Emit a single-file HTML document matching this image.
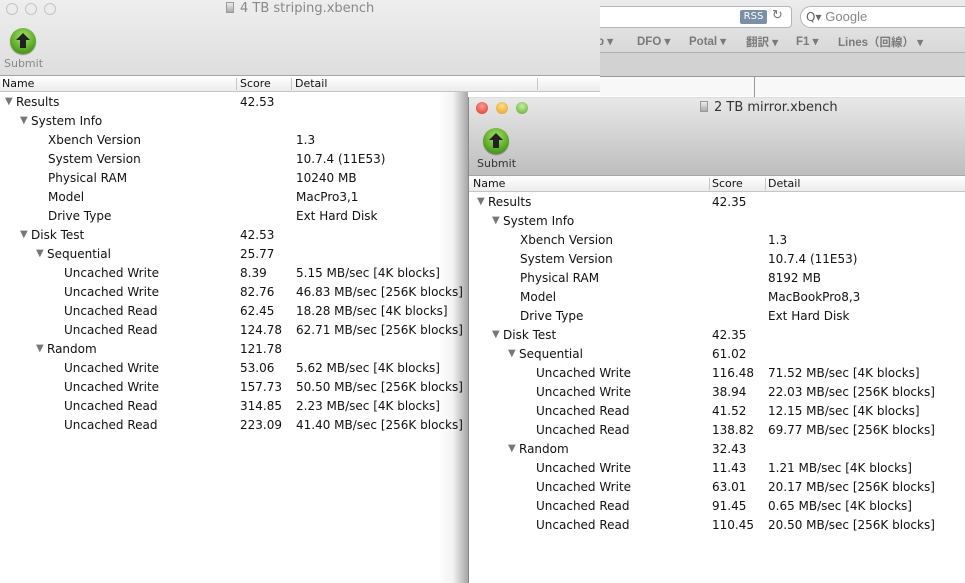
<!DOCTYPE html>
<html><head><meta charset="utf-8"><style>
*{margin:0;padding:0;box-sizing:border-box}
body{width:965px;height:583px;overflow:hidden;position:relative;background:#fff;font-family:"DejaVu Sans","Liberation Sans",sans-serif;font-size:12px;color:#111}
.a{position:absolute;white-space:nowrap}
.r{position:absolute;height:19px;line-height:19px;white-space:nowrap}
.t{display:inline-block;width:11px;font-size:10px;color:#777;vertical-align:top;line-height:18px}
.hdr{position:absolute;height:17px;line-height:16px;font-size:11px;background:linear-gradient(#fff,#ececec);border-top:1px solid #a5a5a5;border-bottom:1px solid #c5c5c5}
.dv{position:absolute;top:2px;width:1px;height:12px;background:#c5c5c5}
.btn{position:absolute;width:26px;height:26px;border-radius:50%;background:radial-gradient(circle at 50% 35%,#a6e46a,#4f9d1d 70%,#2f6d10);box-shadow:0 1px 1px rgba(0,0,0,.4)}
.btn:after{content:"";position:absolute;left:10px;top:12px;width:6px;height:8px;background:#222}
.btn:before{content:"";position:absolute;left:6px;top:5px;border-left:7px solid transparent;border-right:7px solid transparent;border-bottom:7px solid #222}
.bm{position:absolute;top:34px;font-size:11.5px;font-weight:bold;color:#7a7a7a;font-family:'Liberation Sans','Noto Sans CJK JP',sans-serif}
.doc{display:inline-block;width:8px;height:11px;background:linear-gradient(#eee,#aaa);border:1px solid #999;margin-right:6px;vertical-align:-1px}
.gl{position:absolute;top:3px;width:12px;height:12px;border-radius:50%;border:1px solid #c4c4c4;background:#ececec}
</style></head><body>
<!-- browser background -->
<div class="a" style="left:600px;top:0;width:365px;height:53px;background:linear-gradient(#ececec,#d8d8d8)"></div>
<div class="a" style="left:560px;top:6px;width:232px;height:22px;background:#fff;border:1px solid #b5b5b5;border-radius:4px"></div>
<div class="a" style="left:740px;top:10px;width:27px;height:14px;background:#7b8fa6;color:#fff;font-size:10px;line-height:14px;text-align:center;border-radius:2px">RSS</div>
<div class="a" style="left:772px;top:8px;font-size:13px;color:#777">↻</div>
<div class="a" style="left:800px;top:6px;width:180px;height:22px;background:#fff;border:1px solid #b5b5b5;border-radius:11px"></div>
<div class="a" style="left:806px;top:9px;font-size:12px;color:#666">Q▾ <span style="color:#888;font-family:'Liberation Sans',sans-serif;font-size:13px">Google</span></div>
<div class="bm" style="left:597px">p ▾</div>
<div class="bm" style="left:637px">DFO ▾</div>
<div class="bm" style="left:689px">Potal ▾</div>
<div class="bm" style="left:746px">翻訳 ▾</div>
<div class="bm" style="left:796px">F1 ▾</div>
<div class="bm" style="left:838px">Lines（回線） ▾</div>
<div class="a" style="left:600px;top:52px;width:365px;height:24px;background:#d2d2d2;border-top:1px solid #b0b0b0"></div>
<div class="a" style="left:600px;top:76px;width:365px;height:20px;background:#f8f8f8;border-top:1px solid #999"></div>
<div class="a" style="left:754px;top:77px;width:1px;height:20px;background:#999"></div>

<!-- back window -->
<div class="a" style="left:0;top:0;width:600px;height:76px;background:linear-gradient(#eeeeee,#dedede)"></div>
<div class="gl" style="left:6px"></div><div class="gl" style="left:25px"></div><div class="gl" style="left:44px"></div>
<div class="a" style="left:226px;top:1px;font-size:13px;color:#888;font-family:'DejaVu Sans',sans-serif"><span class="doc"></span>4 TB striping.xbench</div>
<div class="btn" style="left:10px;top:28px"></div>
<div class="a" style="left:4px;top:57px;font-size:11px;color:#888">Submit</div>
<div class="hdr" style="left:0;top:75px;width:600px"><span class="a" style="left:2px">Name</span><span class="dv" style="left:236px"></span><span class="a" style="left:240px">Score</span><span class="dv" style="left:291px"></span><span class="a" style="left:295px">Detail</span><span class="dv" style="left:537px"></span></div>
<div class="a" style="left:0;top:92px;width:600px;height:491px;background:#fff"></div>

<div class="r" style="top:93px;left:5px"><span class="t">▼</span>Results</div><div class="r" style="top:93px;left:240px">42.53</div>
<div class="r" style="top:112px;left:20px"><span class="t">▼</span>System Info</div>
<div class="r" style="top:131px;left:48px">Xbench Version</div><div class="r" style="top:131px;left:296px">1.3</div>
<div class="r" style="top:150px;left:48px">System Version</div><div class="r" style="top:150px;left:296px">10.7.4 (11E53)</div>
<div class="r" style="top:169px;left:48px">Physical RAM</div><div class="r" style="top:169px;left:296px">10240 MB</div>
<div class="r" style="top:188px;left:48px">Model</div><div class="r" style="top:188px;left:296px">MacPro3,1</div>
<div class="r" style="top:207px;left:48px">Drive Type</div><div class="r" style="top:207px;left:296px">Ext Hard Disk</div>
<div class="r" style="top:226px;left:20px"><span class="t">▼</span>Disk Test</div><div class="r" style="top:226px;left:240px">42.53</div>
<div class="r" style="top:245px;left:36px"><span class="t">▼</span>Sequential</div><div class="r" style="top:245px;left:240px">25.77</div>
<div class="r" style="top:264px;left:64px">Uncached Write</div><div class="r" style="top:264px;left:240px">8.39</div><div class="r" style="top:264px;left:296px">5.15 MB/sec [4K blocks]</div>
<div class="r" style="top:283px;left:64px">Uncached Write</div><div class="r" style="top:283px;left:240px">82.76</div><div class="r" style="top:283px;left:296px">46.83 MB/sec [256K blocks]</div>
<div class="r" style="top:302px;left:64px">Uncached Read</div><div class="r" style="top:302px;left:240px">62.45</div><div class="r" style="top:302px;left:296px">18.28 MB/sec [4K blocks]</div>
<div class="r" style="top:321px;left:64px">Uncached Read</div><div class="r" style="top:321px;left:240px">124.78</div><div class="r" style="top:321px;left:296px">62.71 MB/sec [256K blocks]</div>
<div class="r" style="top:340px;left:36px"><span class="t">▼</span>Random</div><div class="r" style="top:340px;left:240px">121.78</div>
<div class="r" style="top:359px;left:64px">Uncached Write</div><div class="r" style="top:359px;left:240px">53.06</div><div class="r" style="top:359px;left:296px">5.62 MB/sec [4K blocks]</div>
<div class="r" style="top:378px;left:64px">Uncached Write</div><div class="r" style="top:378px;left:240px">157.73</div><div class="r" style="top:378px;left:296px">50.50 MB/sec [256K blocks]</div>
<div class="r" style="top:397px;left:64px">Uncached Read</div><div class="r" style="top:397px;left:240px">314.85</div><div class="r" style="top:397px;left:296px">2.23 MB/sec [4K blocks]</div>
<div class="r" style="top:416px;left:64px">Uncached Read</div><div class="r" style="top:416px;left:240px">223.09</div><div class="r" style="top:416px;left:296px">41.40 MB/sec [256K blocks]</div>

<!-- front window shadow -->
<div class="a" style="left:438px;top:92px;width:30px;height:491px;background:linear-gradient(90deg,rgba(0,0,0,0),rgba(0,0,0,.05) 50%,rgba(0,0,0,.35))"></div>
<div class="a" style="left:468px;top:97px;width:497px;height:486px;background:#fff;border-left:1px solid #888"></div>
<div class="a" style="left:469px;top:97px;width:496px;height:79px;background:linear-gradient(#e8e8e8,#bdbdbd);border-top:1px solid #ddd"></div>
<div class="a" style="left:476px;top:102px;width:12px;height:12px;border-radius:50%;background:radial-gradient(circle at 50% 35%,#ff9a8f,#d8352a)"></div>
<div class="a" style="left:496px;top:102px;width:12px;height:12px;border-radius:50%;background:radial-gradient(circle at 50% 35%,#ffe08a,#e09a1c)"></div>
<div class="a" style="left:516px;top:102px;width:12px;height:12px;border-radius:50%;background:radial-gradient(circle at 50% 35%,#c6f29a,#5aa530)"></div>
<div class="a" style="left:700px;top:100px;font-size:13px;color:#333;font-family:'DejaVu Sans',sans-serif"><span class="doc"></span>2 TB mirror.xbench</div>
<div class="btn" style="left:483px;top:128px"></div>
<div class="a" style="left:477px;top:157px;font-size:11px;color:#333">Submit</div>
<div class="hdr" style="left:469px;top:175px;width:496px"><span class="a" style="left:4px">Name</span><span class="dv" style="left:240px"></span><span class="a" style="left:243px">Score</span><span class="dv" style="left:296px"></span><span class="a" style="left:299px">Detail</span></div>

<div class="r" style="top:193px;left:477px"><span class="t">▼</span>Results</div><div class="r" style="top:193px;left:712px">42.35</div>
<div class="r" style="top:212px;left:492px"><span class="t">▼</span>System Info</div>
<div class="r" style="top:231px;left:520px">Xbench Version</div><div class="r" style="top:231px;left:768px">1.3</div>
<div class="r" style="top:250px;left:520px">System Version</div><div class="r" style="top:250px;left:768px">10.7.4 (11E53)</div>
<div class="r" style="top:269px;left:520px">Physical RAM</div><div class="r" style="top:269px;left:768px">8192 MB</div>
<div class="r" style="top:288px;left:520px">Model</div><div class="r" style="top:288px;left:768px">MacBookPro8,3</div>
<div class="r" style="top:307px;left:520px">Drive Type</div><div class="r" style="top:307px;left:768px">Ext Hard Disk</div>
<div class="r" style="top:326px;left:492px"><span class="t">▼</span>Disk Test</div><div class="r" style="top:326px;left:712px">42.35</div>
<div class="r" style="top:345px;left:508px"><span class="t">▼</span>Sequential</div><div class="r" style="top:345px;left:712px">61.02</div>
<div class="r" style="top:364px;left:536px">Uncached Write</div><div class="r" style="top:364px;left:712px">116.48</div><div class="r" style="top:364px;left:768px">71.52 MB/sec [4K blocks]</div>
<div class="r" style="top:383px;left:536px">Uncached Write</div><div class="r" style="top:383px;left:712px">38.94</div><div class="r" style="top:383px;left:768px">22.03 MB/sec [256K blocks]</div>
<div class="r" style="top:402px;left:536px">Uncached Read</div><div class="r" style="top:402px;left:712px">41.52</div><div class="r" style="top:402px;left:768px">12.15 MB/sec [4K blocks]</div>
<div class="r" style="top:421px;left:536px">Uncached Read</div><div class="r" style="top:421px;left:712px">138.82</div><div class="r" style="top:421px;left:768px">69.77 MB/sec [256K blocks]</div>
<div class="r" style="top:440px;left:508px"><span class="t">▼</span>Random</div><div class="r" style="top:440px;left:712px">32.43</div>
<div class="r" style="top:459px;left:536px">Uncached Write</div><div class="r" style="top:459px;left:712px">11.43</div><div class="r" style="top:459px;left:768px">1.21 MB/sec [4K blocks]</div>
<div class="r" style="top:478px;left:536px">Uncached Write</div><div class="r" style="top:478px;left:712px">63.01</div><div class="r" style="top:478px;left:768px">20.17 MB/sec [256K blocks]</div>
<div class="r" style="top:497px;left:536px">Uncached Read</div><div class="r" style="top:497px;left:712px">91.45</div><div class="r" style="top:497px;left:768px">0.65 MB/sec [4K blocks]</div>
<div class="r" style="top:516px;left:536px">Uncached Read</div><div class="r" style="top:516px;left:712px">110.45</div><div class="r" style="top:516px;left:768px">20.50 MB/sec [256K blocks]</div>
</body></html>
